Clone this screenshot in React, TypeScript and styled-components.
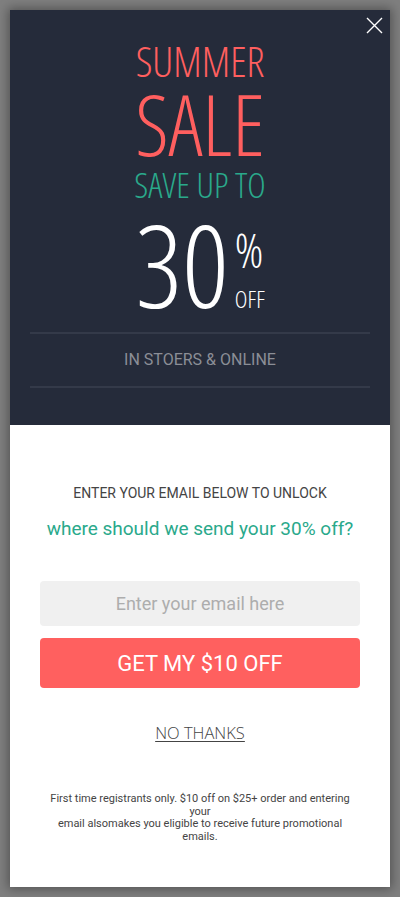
import styled, { createGlobalStyle } from 'styled-components';

const GlobalStyle = createGlobalStyle`
  html, body {
    margin: 0;
    padding: 0;
    background: #7f7f7f;
  }
  body {
    font-family: Roboto, "Liberation Sans", sans-serif;
  }
  * {
    box-sizing: border-box;
  }
`;

function App() {
  return (
    <>
      <GlobalStyle />
      <Page>
        <Modal>
          <Hero>
            <CloseButton aria-label='Close'>
              <svg width='17' height='17' viewBox='0 0 17 17'>
                <path d='M1 1 L16 16 M16 1 L1 16' stroke='#fff' strokeWidth='1.4' fill='none' />
              </svg>
            </CloseButton>
            <Summer>SUMMER</Summer>
            <Sale>SALE</Sale>
            <SaveUpTo>SAVE UP TO</SaveUpTo>
            <Discount>
              <Number>30</Number>
              <Suffix>
                <Percent>%</Percent>
                <Off>OFF</Off>
              </Suffix>
            </Discount>
            <Where>IN STOERS &amp; ONLINE</Where>
          </Hero>
          <Body>
            <Unlock>ENTER YOUR EMAIL BELOW TO UNLOCK</Unlock>
            <Question>where should we send your 30% off?</Question>
            <EmailInput placeholder='Enter your email here' />
            <SubmitButton>GET MY $10 OFF</SubmitButton>
            <NoThanks>NO THANKS</NoThanks>
            <Terms>
              First time registrants only. $10 off on $25+ order and entering your
              <br />
              email alsomakes you eligible to receive future promotional emails.
            </Terms>
          </Body>
        </Modal>
      </Page>
    </>
  );
}

const Page = styled.div`
  padding: 10px;
  min-height: 897px;
`;

const Modal = styled.div`
  width: 380px;
  height: 877px;
  background: #fff;
  box-shadow: 0 0 10px 2px rgba(0, 0, 0, 0.35);
  display: flex;
  flex-direction: column;
`;

const Hero = styled.div`
  position: relative;
  background: #252b3a;
  height: 415px;
  padding: 30px 20px 0;
  display: flex;
  flex-direction: column;
  align-items: center;
`;

const CloseButton = styled.button`
  position: absolute;
  top: 7px;
  right: 7px;
  background: none;
  border: 0;
  padding: 0;
  display: flex;
  cursor: pointer;
`;

const Condensed = styled.div`
  font-family: "Open Sans", sans-serif;
  font-weight: 300;
  font-stretch: 75%;
  line-height: 1;
`;

const Summer = styled(Condensed)`
  color: #ff5f5f;
  font-size: 42px;
`;

const Sale = styled(Condensed)`
  color: #ff5f5f;
  font-size: 84px;
`;

const SaveUpTo = styled(Condensed)`
  color: #2aa98b;
  font-size: 35px;
  margin-top: 1px;
`;

const Discount = styled.div`
  display: flex;
  align-items: flex-end;
  margin-top: 4px;
`;

const Number = styled(Condensed)`
  color: #fff;
  font-size: 115px;
`;

const Suffix = styled.div`
  display: flex;
  flex-direction: column;
  align-items: flex-start;
  margin: 0 0 10px 6px;
`;

const Percent = styled(Condensed)`
  color: #fff;
  font-size: 47px;
`;

const Off = styled(Condensed)`
  color: #fff;
  font-size: 24px;
  margin-top: 13px;
`;

const Where = styled.div`
  align-self: stretch;
  margin-top: 11px;
  border-top: 2px solid #343a49;
  border-bottom: 2px solid #343a49;
  padding: 16px 0;
  text-align: center;
  color: #8b8e96;
  font-size: 16px;
  line-height: 20px;
`;

const Body = styled.div`
  flex: 1;
  padding: 60px 30px 0;
  display: flex;
  flex-direction: column;
  align-items: center;
`;

const Unlock = styled.div`
  color: #444;
  font-size: 14px;
  line-height: 16px;
`;

const Question = styled.div`
  color: #2aa98b;
  font-size: 19px;
  line-height: 22px;
  margin-top: 17px;
`;

const EmailInput = styled.input`
  width: 320px;
  height: 45px;
  margin-top: 41px;
  border: 0;
  border-radius: 4px;
  background: #f0f0f0;
  text-align: center;
  font-family: Roboto, sans-serif;
  font-size: 18px;
  color: #333;
  outline: none;

  &::placeholder {
    color: #adadad;
  }
`;

const SubmitButton = styled.button`
  width: 320px;
  height: 50px;
  margin-top: 12px;
  border: 0;
  border-radius: 4px;
  background: #ff605f;
  color: #fff;
  font-family: Roboto, sans-serif;
  font-size: 22px;
  cursor: pointer;
`;

const NoThanks = styled.a`
  margin-top: 35px;
  font-family: "Open Sans", sans-serif;
  font-weight: 300;
  font-size: 16.5px;
  line-height: 20px;
  color: #444;
  text-decoration: underline;
  text-underline-offset: 2px;
  cursor: pointer;
`;

const Terms = styled.p`
  width: 300px;
  margin: 50px 0 0;
  text-align: center;
  color: #444;
  font-size: 11px;
  line-height: 12.5px;
`;

export default App;
